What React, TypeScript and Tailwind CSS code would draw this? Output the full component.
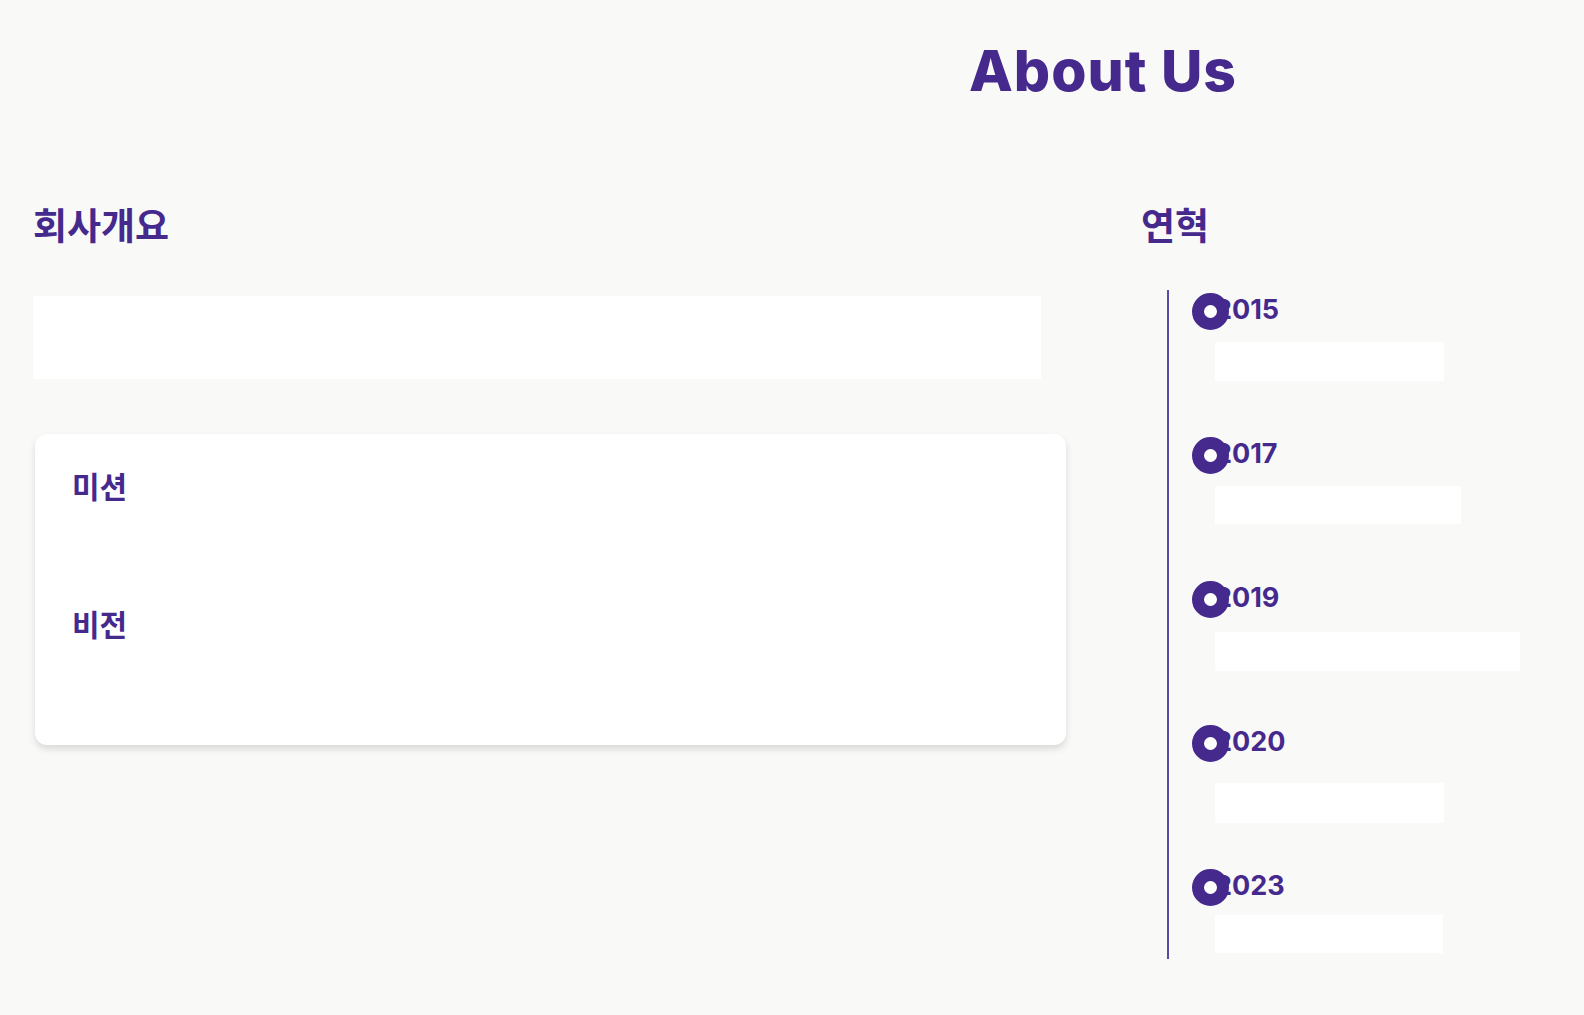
import React from "react"

/* 연혁 데이터 */
const HISTORY = [
  { year: "2015", width: "w-[229px]", gap: "mt-[16px]", h: "h-[39px]" },
  { year: "2017", width: "w-[246px]", gap: "mt-[16px]", h: "h-[38px]" },
  { year: "2019", width: "w-[305px]", gap: "mt-[18px]", h: "h-[39px]" },
  { year: "2020", width: "w-[229px]", gap: "mt-[25px]", h: "h-[40px]" },
  { year: "2023", width: "w-[228px]", gap: "mt-[13px]", h: "h-[38px]" },
]

const KR = "font-['Noto_Sans_CJK_KR','Noto_Sans',sans-serif]"

export default function App() {
  return (
    <div className="min-h-[1015px] w-full bg-[#f9f9f8] text-[#46298d]">
      {/* Title */}
      <div className="flex justify-center pl-[622px] pt-[36px]">
        <h1 className="font-['Inter',sans-serif] text-[57px] font-extrabold leading-[70px] tracking-[1px]">
          About Us
        </h1>
      </div>

      <div className="mt-[94px] flex pl-[33px]">
        {/* 회사개요 */}
        <section className="w-[1033px]">
          <h2 className={`${KR} text-[37px] font-bold leading-[48px]`}>회사개요</h2>
          <div className="mt-[48px] h-[83px] w-[1008px] bg-white" />
          <div className="mt-[55px] ml-[2px] h-[311px] rounded-xl bg-white px-[37px] pt-[27px] shadow-[0_4px_7px_rgba(0,0,0,0.13)]">
            <h3 className={`${KR} text-[30px] font-bold leading-[48px]`}>미션</h3>
            <h3 className={`${KR} mt-[90px] text-[30px] font-bold leading-[48px]`}>비전</h3>
          </div>
        </section>

        {/* 연혁 */}
        <section className="ml-[75px] flex-1">
          <h2 className={`${KR} text-[37px] font-bold leading-[48px]`}>연혁</h2>
          <div className="ml-[26px] mt-[42px] flex h-[669px] flex-col border-l-2 border-[#5b4aa3] pt-[4px]">
            {HISTORY.map((item, i) => (
              <div key={item.year} className={`relative pl-[46px] ${i < HISTORY.length - 1 ? "h-[144px]" : ""}`}>
                <span className="absolute left-[23px] top-[-1px] z-10 h-[37px] w-[37px] rounded-full border-[12px] border-[#46298d] bg-white" />
                <div className="font-['Inter',sans-serif] text-[27px] font-bold leading-[32px]">{item.year}</div>
                <div className={`${item.gap} ${item.h} ${item.width} bg-white`} />
              </div>
            ))}
          </div>
        </section>
      </div>
    </div>
  )
}
